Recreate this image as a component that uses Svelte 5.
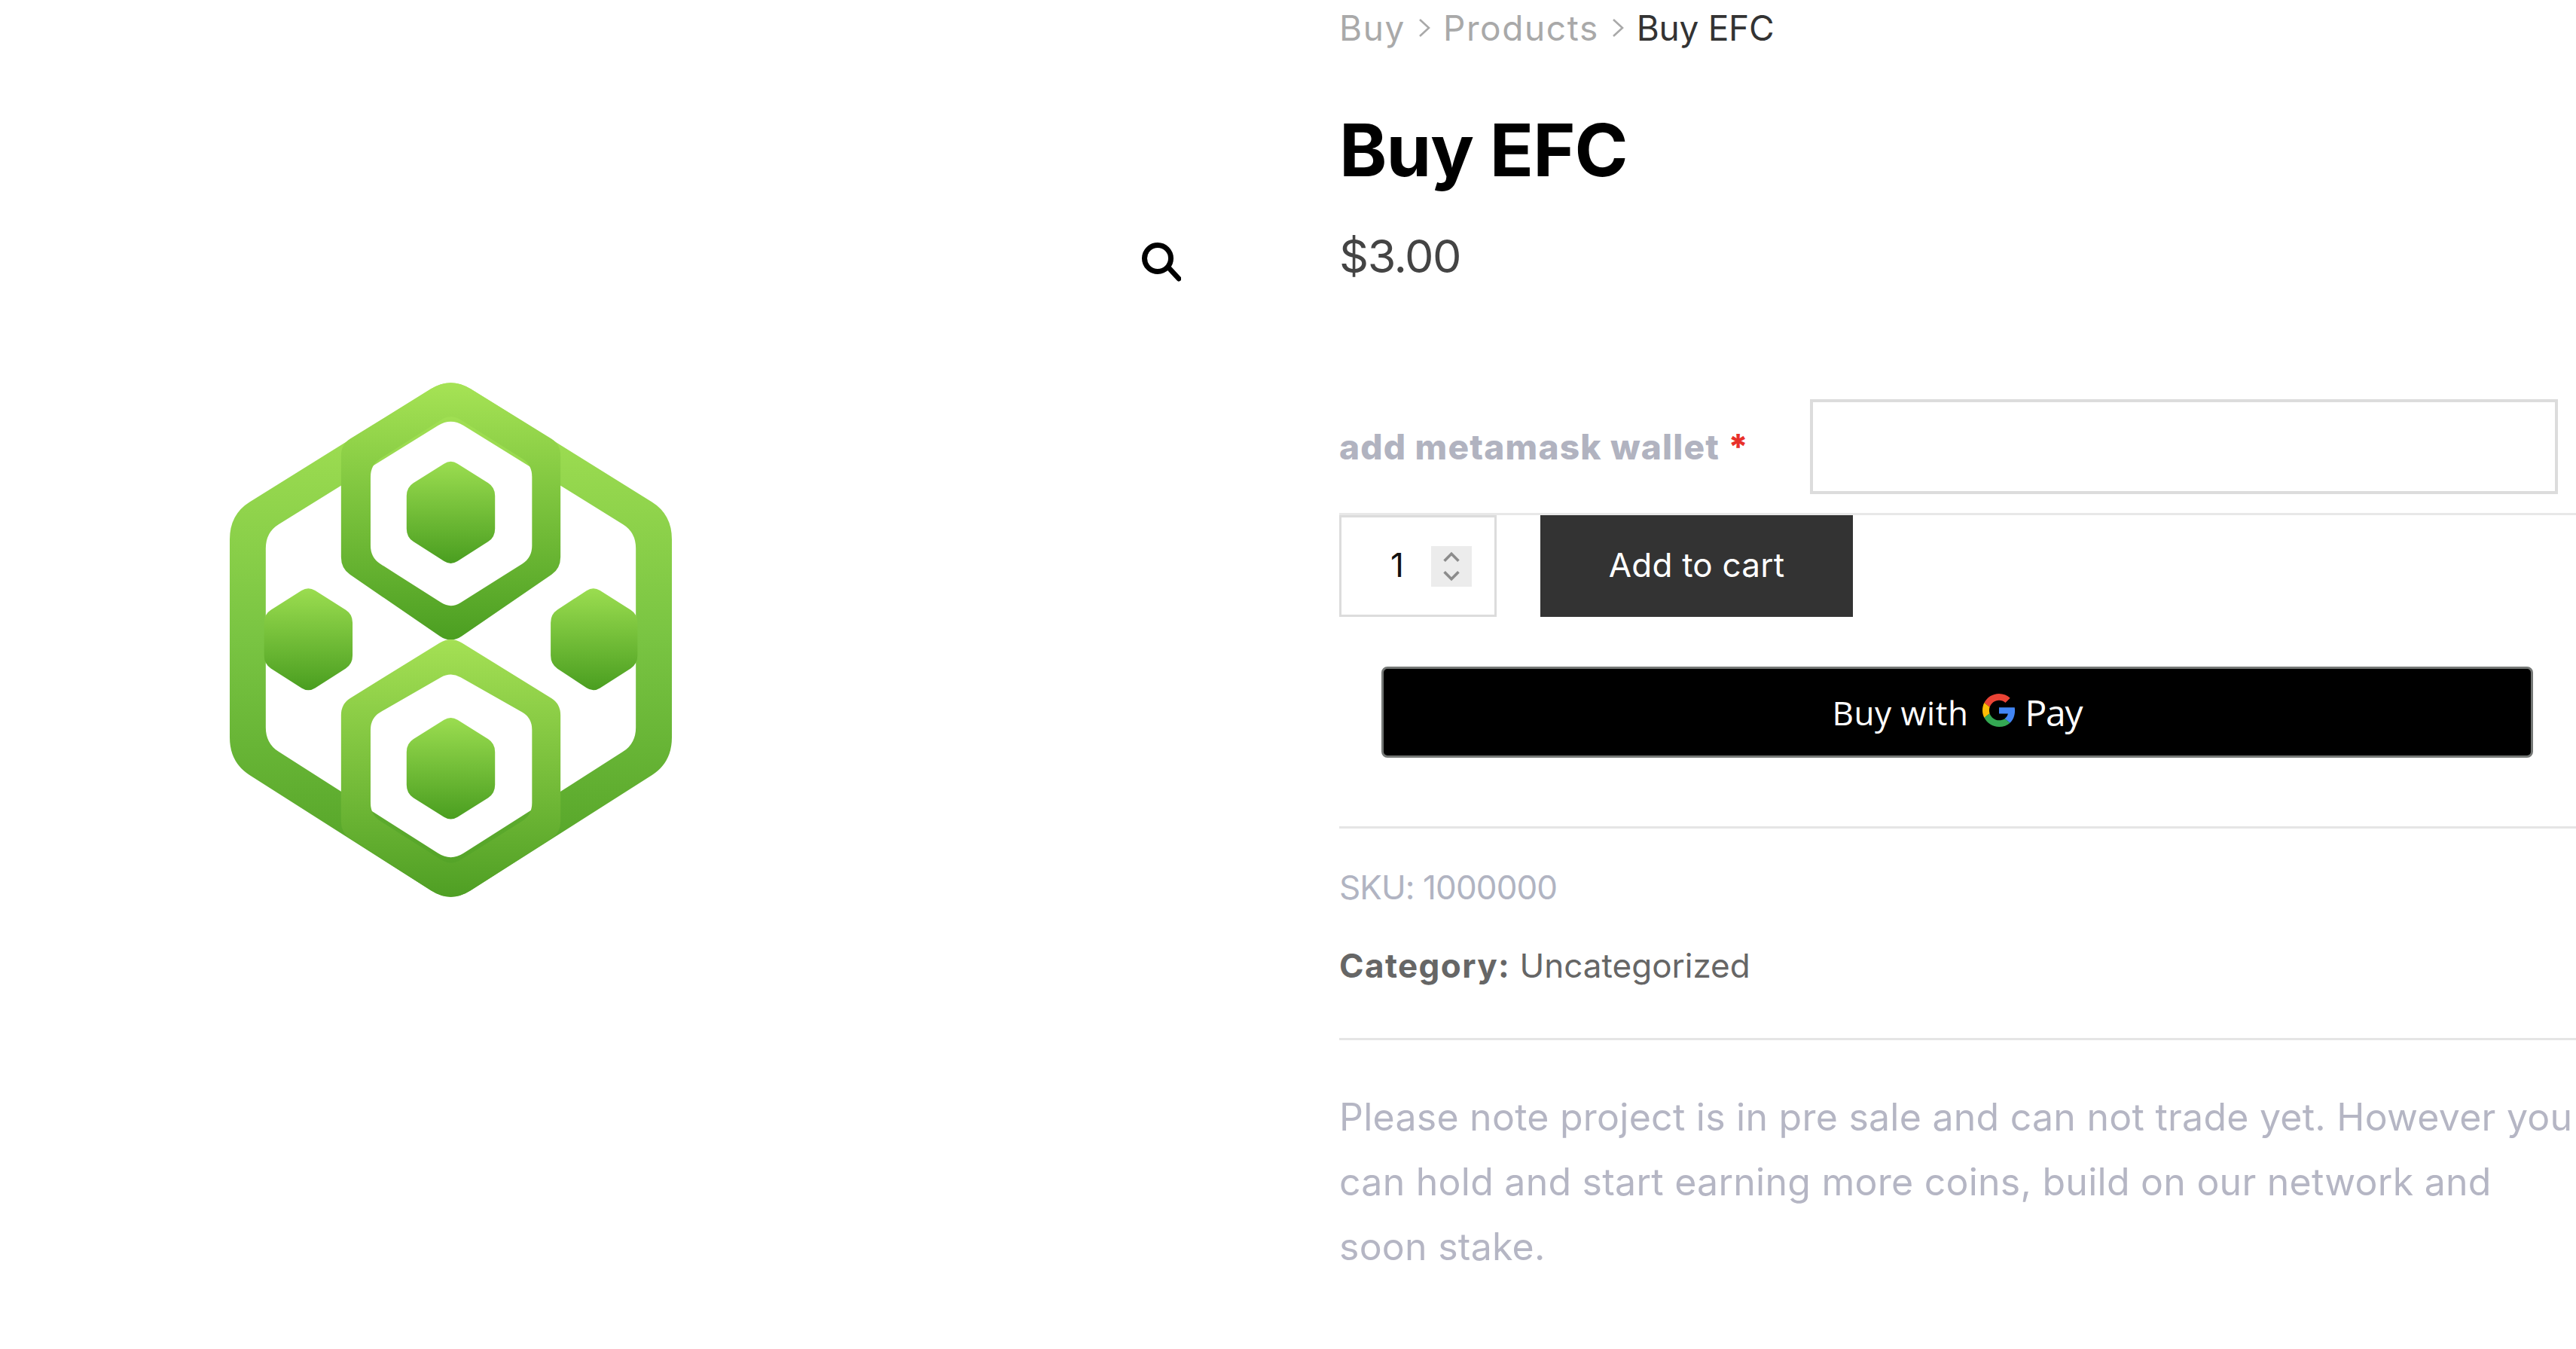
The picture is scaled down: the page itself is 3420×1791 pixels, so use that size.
<script>
  const crumbs = ['Buy', 'Products'];

  // corners are cut back by r (or the point's own third value) and joined with a curve
  function hex(points, r) {
    let d = '';
    points.forEach((p, i) => {
      const prev = points[(i + points.length - 1) % points.length];
      const next = points[(i + 1) % points.length];
      const size = p[2] || r;
      const cut = (a, b) => {
        const len = Math.hypot(b[0] - a[0], b[1] - a[1]);
        return [a[0] + ((b[0] - a[0]) * size) / len, a[1] + ((b[1] - a[1]) * size) / len];
      };
      const from = cut(p, prev);
      const to = cut(p, next);
      d += `${i ? 'L' : 'M'}${from[0]} ${from[1]}Q${p[0]} ${p[1]} ${to[0]} ${to[1]}`;
    });
    return d + 'Z';
  }

  const ring = hex([[780, 68], [1455, 454], [1455, 1148], [780, 1542], [105, 1148], [105, 454]], 70)
    + hex([[780, 183], [1345, 504], [1345, 1095], [780, 1425], [215, 1095], [215, 504]], 45);
  const upper = hex([[780, 68, 70], [1115, 258], [1115, 605], [780, 816, 40], [445, 605], [445, 258]], 32)
    + hex([[780, 172], [1028, 315], [1028, 575], [780, 718], [535, 575], [535, 315]], 34);
  const lower = hex([[780, 794, 40], [1115, 984], [1115, 1345], [780, 1542, 70], [445, 1345], [445, 984]], 32)
    + hex([[780, 894], [1028, 1023], [1028, 1295], [780, 1438], [535, 1295], [535, 1023]], 34);
  const cells = [
    hex([[345, 655], [480, 733], [480, 873], [345, 952], [210, 873], [210, 733]], 24),
    hex([[1215, 655], [1350, 733], [1350, 873], [1215, 952], [1085, 873], [1085, 733]], 24)
  ];
  const inner = [
    hex([[780, 300], [915, 378], [915, 518], [780, 597], [645, 518], [645, 378]], 24),
    hex([[780, 1017], [915, 1095], [915, 1235], [780, 1313], [645, 1235], [645, 1095]], 24)
  ];
</script>

<div class="product">
  <div class="gallery">
    <svg class="logo" viewBox="105 85 1350 1440" preserveAspectRatio="none" aria-label="EFC logo">
      <defs>
        <linearGradient id="band" gradientUnits="userSpaceOnUse" x1="0" y1="85" x2="0" y2="1525">
          <stop offset="0" stop-color="#a6e355" />
          <stop offset="0.5" stop-color="#79c442" />
          <stop offset="1" stop-color="#4f9f24" />
        </linearGradient>
        <linearGradient id="upper" gradientUnits="userSpaceOnUse" x1="0" y1="85" x2="0" y2="800">
          <stop offset="0" stop-color="#a6e355" />
          <stop offset="1" stop-color="#4c9f22" />
        </linearGradient>
        <linearGradient id="lower" gradientUnits="userSpaceOnUse" x1="0" y1="810" x2="0" y2="1525">
          <stop offset="0" stop-color="#a4e054" />
          <stop offset="1" stop-color="#4f9f24" />
        </linearGradient>
        <linearGradient id="cell" x1="0" y1="0" x2="0" y2="1">
          <stop offset="0" stop-color="#9bdd50" />
          <stop offset="1" stop-color="#4a9e20" />
        </linearGradient>
      </defs>
      <path fill="url(#band)" fill-rule="evenodd" d={ring} />
      {#each cells as d}
        <path fill="url(#cell)" {d} />
      {/each}
      <path fill="url(#upper)" fill-rule="evenodd" d={upper} />
      <path fill="url(#lower)" fill-rule="evenodd" d={lower} />
      {#each inner as d}
        <path fill="url(#cell)" {d} />
      {/each}
    </svg>
    <svg class="zoom" viewBox="0 0 54 54" aria-label="Zoom image">
      <circle cx="23" cy="23" r="17.5" />
      <path d="M39 37 51 50" />
    </svg>
  </div>

  <div class="summary">
    <nav class="crumbs">
      {#each crumbs as crumb}
        <span>{crumb}</span>
        <svg class="sep" viewBox="0 0 16 26"><path d="M2 2 14 13 2 24" /></svg>
      {/each}
      <span class="current">Buy EFC</span>
    </nav>

    <h1>Buy EFC</h1>
    <p class="price">$3.00</p>

    <div class="field">
      <label for="wallet">add metamask wallet <em>*</em></label>
      <input id="wallet" type="text" />
    </div>

    <div class="cart">
      <div class="qty">
        <span class="qty-value">1</span>
        <span class="spinner">
          <svg viewBox="0 0 24 44">
            <path d="M3 15 12 6 21 15" />
            <path d="M3 29 12 38 21 29" />
          </svg>
        </span>
      </div>
      <button class="add">Add to cart</button>
    </div>

    <button class="gpay">
      <span class="buy">Buy with</span>
      <svg class="g" viewBox="0 0 48 48">
        <path fill="#EA4335" d="M24 9.5c3.54 0 6.71 1.22 9.21 3.6l6.85-6.85C35.9 2.38 30.47 0 24 0 14.62 0 6.51 5.38 2.56 13.22l7.98 6.19C12.43 13.72 17.74 9.5 24 9.5z" />
        <path fill="#4285F4" d="M46.98 24.55c0-1.57-.15-3.09-.38-4.55H24v9.02h12.94c-.58 2.96-2.26 5.48-4.78 7.18l7.73 6c4.51-4.18 7.09-10.36 7.09-17.65z" />
        <path fill="#FBBC05" d="M10.53 28.59c-.48-1.45-.76-2.99-.76-4.59s.27-3.14.76-4.59l-7.98-6.19C.92 16.46 0 20.12 0 24c0 3.88.92 7.54 2.56 10.78l7.97-6.19z" />
        <path fill="#34A853" d="M24 48c6.48 0 11.93-2.13 15.89-5.81l-7.73-6c-2.15 1.45-4.92 2.3-8.16 2.3-6.26 0-11.57-4.22-13.47-9.91l-7.98 6.19C6.51 42.62 14.62 48 24 48z" />
      </svg>
      <span class="pay">Pay</span>
    </button>

    <hr class="rule-top" />

    <p class="sku">SKU: 1000000</p>
    <p class="category"><strong>Category:</strong> Uncategorized</p>

    <hr class="rule-bottom" />

    <p class="note">
      Please note project is in pre sale and can not trade yet. However you can hold and start earning more coins, build on our network and soon stake.
    </p>
  </div>
</div>

<style>
  :global(body) {
    margin: 0;
    background: #fff;
    overflow: hidden;
  }

  .product {
    display: flex;
    height: 1791px;
    overflow: hidden;
    font-family: Inter, "Open Sans", sans-serif;
  }

  .gallery {
    position: relative;
    width: 1778px;
    flex: none;
    padding: 508px 0 0 305px;
    box-sizing: border-box;
  }

  .logo {
    display: block;
    width: 587px;
    height: 683px;
    overflow: visible;
  }

  .zoom {
    position: absolute;
    left: 1514px;
    top: 320px;
    width: 54px;
    height: 54px;
    fill: none;
    stroke: #000;
    stroke-width: 7;
    stroke-linecap: round;
  }

  .summary {
    flex: 1;
    min-width: 0;
  }

  .crumbs {
    display: flex;
    align-items: center;
    gap: 17px;
    height: 74px;
    font-size: 46px;
    letter-spacing: 1.6px;
    color: #a9a9a9;
  }

  .crumbs .current {
    color: #333;
    letter-spacing: -0.3px;
  }

  .sep {
    width: 16px;
    height: 26px;
    fill: none;
    stroke: #a9a9a9;
    stroke-width: 2.6;
  }

  h1 {
    margin: 65px 0 0;
    font-size: 96px;
    line-height: 120px;
    font-weight: 700;
    letter-spacing: -1px;
    color: #000;
  }

  .price {
    margin: 45px 0 0;
    font-size: 61px;
    line-height: 72px;
    letter-spacing: -1.5px;
    color: #444;
  }

  .field {
    display: flex;
    align-items: center;
    margin-top: 154px;
    padding-right: 24px;
  }

  label {
    flex: 1;
    font-size: 46px;
    font-weight: 800;
    letter-spacing: 1.2px;
    color: #b1b3c0;
  }

  em {
    font-style: normal;
    color: #e8302a;
  }

  input {
    display: block;
    width: 993px;
    height: 126px;
    box-sizing: border-box;
    border: 4px solid #dcdcdc;
    background: #fff;
    outline: none;
  }

  .cart {
    display: flex;
    gap: 58px;
    margin-top: 25px;
    border-top: 3px solid #e8e8e8;
    height: 135px;
  }

  .qty {
    display: flex;
    align-items: center;
    width: 209px;
    box-sizing: border-box;
    border: 3px solid #dcdcdc;
    padding-left: 65px;
  }

  .qty-value {
    width: 54px;
    padding-bottom: 3px;
    font-size: 44px;
    color: #111;
  }

  .spinner {
    display: flex;
    align-items: center;
    justify-content: center;
    width: 54px;
    height: 54px;
    background: #ececec;
  }

  .spinner svg {
    width: 26px;
    height: 46px;
    fill: none;
    stroke: #8c8c8c;
    stroke-width: 3.5;
  }

  .add {
    width: 415px;
    border: 0;
    padding: 0 0 3px;
    background: #333;
    color: #fff;
    font: 400 44px Inter, sans-serif;
    letter-spacing: 0.2px;
  }

  .gpay {
    display: flex;
    align-items: center;
    justify-content: center;
    width: 1529px;
    height: 121px;
    box-sizing: border-box;
    margin: 66px 0 0 56px;
    border: 3px solid #747775;
    border-radius: 8px;
    background: #000;
    color: #fff;
    font: 400 44px "Open Sans", sans-serif;
  }

  .buy {
    letter-spacing: 0.5px;
  }

  .g {
    width: 44px;
    height: 44px;
    margin: 0 12px 5px 19px;
  }

  .pay {
    font-size: 48px;
    letter-spacing: -1.2px;
  }

  hr {
    height: 3px;
    margin: 0;
    border: 0;
    background: #e5e5e5;
  }

  .rule-top {
    margin-top: 91px;
  }

  .rule-bottom {
    margin-top: 66px;
  }

  .sku,
  .category {
    font-size: 44px;
    line-height: 60px;
  }

  .sku {
    margin: 48px 0 0;
    letter-spacing: -0.9px;
    color: #b1b4c2;
  }

  .category {
    margin: 44px 0 0;
    color: #666;
  }

  .category strong {
    font-weight: 700;
    letter-spacing: 1.4px;
  }

  .note {
    margin: 59px 0 0;
    font-size: 50px;
    line-height: 86px;
    letter-spacing: 0.25px;
    color: #b5b6c4;
    width: 1640px;
  }
</style>
